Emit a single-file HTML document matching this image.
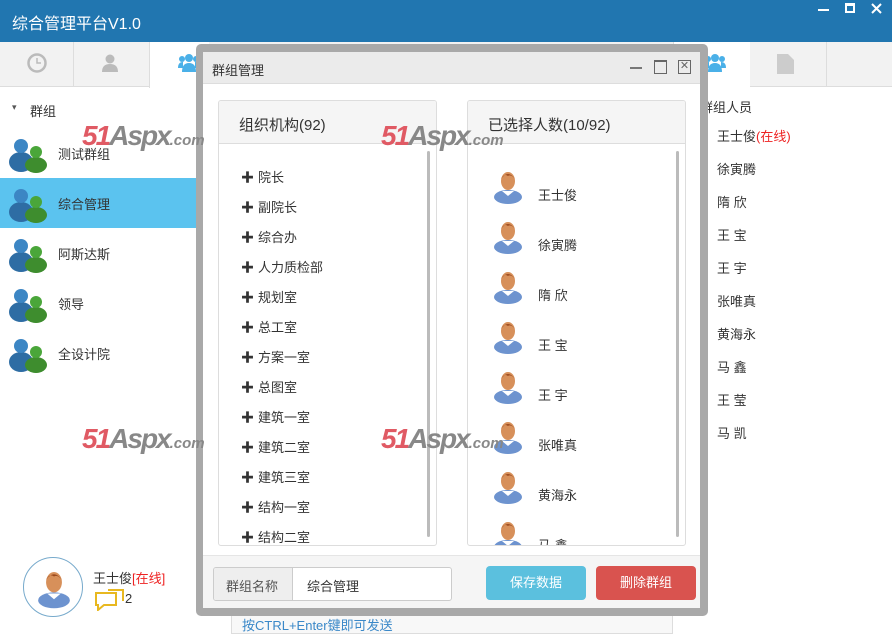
<!DOCTYPE html>
<html><head><meta charset="utf-8"><style>
*{margin:0;padding:0;box-sizing:border-box}
body{width:892px;height:634px;overflow:hidden;background:#fff;font-family:"Liberation Sans","Noto Sans CJK SC",sans-serif;font-size:13px;color:#333;position:relative}
.abs{position:absolute}
.hdr{left:0;top:0;width:892px;height:42px;background:#2176b0}
.tabs{left:0;top:42px;width:892px;height:45px;background:#f2f2f2;border-bottom:1px solid #ddd}
.item{left:0;width:202px;height:50px}
.item span{position:absolute;left:58px;top:16px;font-size:13px}
.wm{font:italic bold 28px "Liberation Sans",sans-serif;color:#e05a64;letter-spacing:-2px}
.wm b{color:#888}
.wm i{font-size:15px;color:#888;font-style:italic;letter-spacing:0}
.dlg{left:196px;top:44px;width:512px;height:572px;background:#a9a9a9;border-radius:5px}
.panel{background:#fff;border:1px solid #ddd;border-radius:3px}
.ph{height:43px;background:#f5f5f5;border-bottom:1px solid #ddd;font-size:15px;padding:13px 0 0 20px}
.org{position:absolute;left:22px;font-size:13px}
.org:before{content:"✚";font-size:13px;color:#333;margin-right:4px}
.sel{position:absolute;left:70px;font-size:13px}
.mem{position:absolute;left:717px;font-size:13px}
</style></head><body>
<svg width="0" height="0" style="position:absolute"><defs>
<g id="p"><ellipse cx="15" cy="28" rx="14" ry="7" fill="#6d93cf"/><path d="M9 22 L15 27 L21 22Z" fill="#fff"/><ellipse cx="15" cy="12" rx="7" ry="9" fill="#d7905a"/><path d="M8 10 Q15 0 22 10 Q18 5 15 7 Q11 4 8 10Z" fill="#9b4a1e"/></g>
<g id="g"><ellipse cx="13" cy="26" rx="12" ry="10" fill="#2e6da4"/><circle cx="13" cy="10" r="7" fill="#3c86c4"/><ellipse cx="28" cy="29" rx="11" ry="8" fill="#3e8d2e"/><circle cx="28" cy="16" r="6" fill="#4aa63a"/></g>
</defs></svg>
<div class="abs hdr"><div class="abs" style="left:12px;top:10px;color:#fff;font-size:16px">综合管理平台V1.0</div>
<div class="abs" style="left:818px;top:9px;width:11px;height:2px;background:#fff"></div>
<div class="abs" style="left:845px;top:3px;width:10px;height:10px;border:2px solid #fff;border-top-width:3px"></div>
<svg class="abs" style="left:871px;top:3px" width="11" height="11"><path d="M1 1L10 10M10 1L1 10" stroke="#fff" stroke-width="2"/></svg>
</div>
<div class="abs tabs">
<div class="abs" style="left:73px;top:0;width:1px;height:45px;background:#ddd"></div>
<div class="abs" style="left:149px;top:0;width:60px;height:46px;background:#fff;border-left:1px solid #ddd"></div>
<svg class="abs" style="left:27px;top:11px" width="20" height="20"><circle cx="10" cy="10" r="8.5" fill="none" stroke="#bbb" stroke-width="2.5"/><path d="M10 5V10H14" fill="none" stroke="#bbb" stroke-width="1.5"/></svg>
<svg class="abs" style="left:101px;top:12px" width="18" height="18"><circle cx="9" cy="5" r="4.5" fill="#bbb"/><path d="M1 18 Q1 10 9 10 Q17 10 17 18Z" fill="#bbb"/></svg>
<svg class="abs" style="left:178px;top:10px" width="22" height="22"><circle cx="11" cy="6" r="4" fill="#4ab0e8"/><circle cx="4" cy="7" r="3" fill="#4ab0e8"/><circle cx="18" cy="7" r="3" fill="#4ab0e8"/><path d="M4 20 Q4 11 11 11 Q18 11 18 20Z" fill="#4ab0e8"/><path d="M0 16 Q0 10 5 10 L5 16Z M22 16 Q22 10 17 10 L17 16Z" fill="#4ab0e8"/></svg>
<div class="abs" style="left:673px;top:0;width:77px;height:46px;background:#fff;border-left:1px solid #ddd"></div>
<svg class="abs" style="left:704px;top:10px" width="22" height="22"><circle cx="11" cy="6" r="4" fill="#4ab0e8"/><circle cx="4" cy="7" r="3" fill="#4ab0e8"/><circle cx="18" cy="7" r="3" fill="#4ab0e8"/><path d="M4 20 Q4 11 11 11 Q18 11 18 20Z" fill="#4ab0e8"/><path d="M0 16 Q0 10 5 10 L5 16Z M22 16 Q22 10 17 10 L17 16Z" fill="#4ab0e8"/></svg>
<div class="abs" style="left:826px;top:0;width:1px;height:45px;background:#ddd"></div>
<svg class="abs" style="left:777px;top:12px" width="18" height="20"><path d="M0 0H11L17 6V20H0Z" fill="#ccc"/></svg>
</div>
<div class="abs" style="left:12px;top:102px;font-size:9px;color:#555">▾</div>
<div class="abs" style="left:30px;top:101px;font-size:13px">群组</div>
<div class="abs item" style="top:128px"><svg class="abs" style="left:8px;top:8px" width="40" height="38"><use href="#g"/></svg><span>测试群组</span></div>
<div class="abs item" style="top:178px;background:#5bc3ef"><svg class="abs" style="left:8px;top:8px" width="40" height="38"><use href="#g"/></svg><span>综合管理</span></div>
<div class="abs item" style="top:228px"><svg class="abs" style="left:8px;top:8px" width="40" height="38"><use href="#g"/></svg><span>阿斯达斯</span></div>
<div class="abs item" style="top:278px"><svg class="abs" style="left:8px;top:8px" width="40" height="38"><use href="#g"/></svg><span>领导</span></div>
<div class="abs item" style="top:328px"><svg class="abs" style="left:8px;top:8px" width="40" height="38"><use href="#g"/></svg><span>全设计院</span></div>
<div class="abs" style="left:700px;top:97px">群组人员</div>
<div class="mem" style="top:126px">王士俊<span style="color:#e22">(在线)</span></div>
<div class="mem" style="top:159px">徐寅腾</div><div class="mem" style="top:192px">隋 欣</div>
<div class="mem" style="top:225px">王 宝</div><div class="mem" style="top:258px">王 宇</div>
<div class="mem" style="top:291px">张唯真</div><div class="mem" style="top:324px">黄海永</div>
<div class="mem" style="top:357px">马 鑫</div><div class="mem" style="top:390px">王 莹</div>
<div class="mem" style="top:423px">马 凯</div>
<div class="abs" style="left:23px;top:557px;width:60px;height:60px;border:1px solid #7ac;border-radius:50%;overflow:hidden"><svg style="position:absolute;left:13px;top:8px" width="34" height="46" viewBox="0 0 30 36"><use href="#p"/></svg></div>
<div class="abs" style="left:93px;top:568px">王士俊<span style="color:#e22">[在线]</span></div>
<svg class="abs" style="left:94px;top:589px" width="32" height="22"><path d="M2 4H22V16H10L4 21V16H2Z" fill="none" stroke="#e8b820" stroke-width="2"/><path d="M14 1H29V12" fill="none" stroke="#e8b820" stroke-width="2"/></svg>
<div class="abs" style="left:125px;top:591px">2</div>
<div class="abs" style="left:231px;top:610px;width:442px;height:24px;background:#f8f8f8;border:1px solid #ddd"><span style="position:absolute;left:10px;top:4px;color:#3a88c8">按CTRL+Enter键即可发送</span></div>

<div class="abs dlg">
<div class="abs" style="left:7px;top:8px;width:497px;height:556px;background:#fff">
<div class="abs" style="left:0;top:0;width:497px;height:32px;background:#ebebeb;border-bottom:1px solid #ddd"><span style="position:absolute;left:9px;top:8px">群组管理</span>
<div class="abs" style="left:427px;top:15px;width:12px;height:2px;background:#777"></div>
<div class="abs" style="left:451px;top:8px;width:13px;height:14px;border:1px solid #666;border-top-width:2px"></div>
<div class="abs" style="left:475px;top:8px;width:13px;height:14px;border:1px solid #666;font-size:11px;line-height:11px;text-align:center;color:#666">✕</div>
</div>
<div class="abs panel" style="left:15px;top:48px;width:219px;height:446px;overflow:hidden"><div class="ph">组织机构(92)</div>
<div class="abs" style="left:208px;top:50px;width:3px;height:386px;background:#bbb;border-radius:2px"></div>
<div class="org" style="top:66px">院长</div><div class="org" style="top:96px">副院长</div><div class="org" style="top:126px">综合办</div><div class="org" style="top:156px">人力质检部</div><div class="org" style="top:186px">规划室</div><div class="org" style="top:216px">总工室</div><div class="org" style="top:246px">方案一室</div><div class="org" style="top:276px">总图室</div><div class="org" style="top:306px">建筑一室</div><div class="org" style="top:336px">建筑二室</div><div class="org" style="top:366px">建筑三室</div><div class="org" style="top:396px">结构一室</div><div class="org" style="top:426px">结构二室</div>
</div>
<div class="abs panel" style="left:264px;top:48px;width:219px;height:446px;overflow:hidden"><div class="ph">已选择人数(10/92)</div>
<div class="abs" style="left:208px;top:50px;width:3px;height:386px;background:#bbb;border-radius:2px"></div>
<svg class="abs" style="left:25px;top:68px" width="30" height="36"><use href="#p"/></svg><div class="sel" style="top:84px">王士俊</div>
<svg class="abs" style="left:25px;top:118px" width="30" height="36"><use href="#p"/></svg><div class="sel" style="top:134px">徐寅腾</div>
<svg class="abs" style="left:25px;top:168px" width="30" height="36"><use href="#p"/></svg><div class="sel" style="top:184px">隋 欣</div>
<svg class="abs" style="left:25px;top:218px" width="30" height="36"><use href="#p"/></svg><div class="sel" style="top:234px">王 宝</div>
<svg class="abs" style="left:25px;top:268px" width="30" height="36"><use href="#p"/></svg><div class="sel" style="top:284px">王 宇</div>
<svg class="abs" style="left:25px;top:318px" width="30" height="36"><use href="#p"/></svg><div class="sel" style="top:334px">张唯真</div>
<svg class="abs" style="left:25px;top:368px" width="30" height="36"><use href="#p"/></svg><div class="sel" style="top:384px">黄海永</div>
<svg class="abs" style="left:25px;top:418px" width="30" height="36"><use href="#p"/></svg><div class="sel" style="top:434px">马 鑫</div>
</div>
<div class="abs" style="left:0;top:503px;width:497px;height:53px;background:#f5f5f5;border-top:1px solid #e5e5e5">
<div class="abs" style="left:10px;top:11px;width:239px;height:34px;border:1px solid #ccc;border-radius:3px;background:#fff;overflow:hidden">
<div class="abs" style="left:0;top:0;width:79px;height:32px;background:#eee;border-right:1px solid #ccc;color:#555;padding:8px 0 0 12px">群组名称</div>
<div class="abs" style="left:93px;top:8px">综合管理</div></div>
<div class="abs" style="left:283px;top:10px;width:100px;height:34px;background:#5bc0de;border-radius:4px;color:#fff;text-align:center;line-height:34px">保存数据</div>
<div class="abs" style="left:393px;top:10px;width:100px;height:34px;background:#d9534f;border-radius:4px;color:#fff;text-align:center;line-height:34px">删除群组</div>
</div>
</div></div>
<div class="abs wm" style="left:82px;top:120px">51<b>Aspx</b><i>.com</i></div>
<div class="abs wm" style="left:381px;top:120px">51<b>Aspx</b><i>.com</i></div>
<div class="abs wm" style="left:82px;top:423px">51<b>Aspx</b><i>.com</i></div>
<div class="abs wm" style="left:381px;top:423px">51<b>Aspx</b><i>.com</i></div>
</body></html>
